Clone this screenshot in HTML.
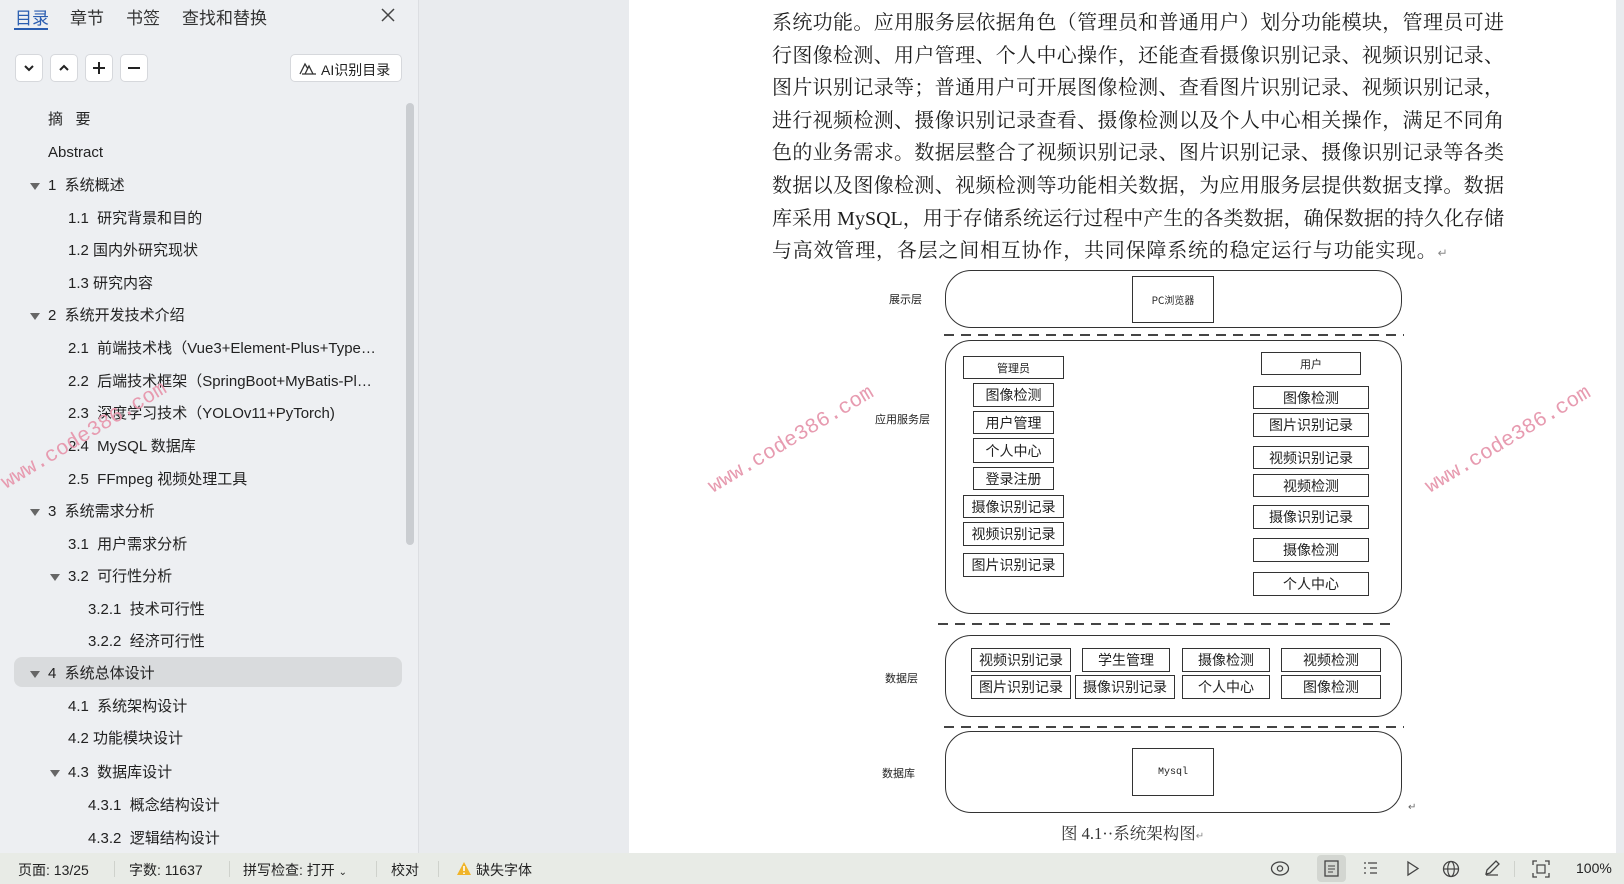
<!DOCTYPE html>
<html><head><meta charset="utf-8"><style>
*{margin:0;padding:0;box-sizing:border-box}
body{width:1624px;height:884px;overflow:hidden;position:relative;background:#e9ebee;font-family:"Liberation Sans","Noto Sans CJK SC",sans-serif;color:#222}
.a{position:absolute;white-space:nowrap}
#side{position:absolute;left:0;top:0;width:419px;height:853px;background:#edeff2;border-right:1px solid #dcdee2}
.tab{position:absolute;top:4px;font-size:17px;color:#333}
.btn{position:absolute;top:54px;width:28px;height:28px;background:#fff;border:1px solid #d6d8dc;border-radius:5px}
.it{position:absolute;font-size:15px;color:#222;line-height:20px}
.tri{position:absolute;width:0;height:0;border-left:5px solid transparent;border-right:5px solid transparent;border-top:7px solid #666}
#page{position:absolute;left:629px;top:0;width:987px;height:853px;background:#fff}
.ln{position:absolute;left:772px;width:732px;font-family:"Liberation Serif","Noto Serif CJK SC",serif;font-size:20px;line-height:32.6px;text-align:justify;text-align-last:justify;color:#1e1e1e;white-space:nowrap}
.rb{position:absolute;border:1.3px solid #333;border-radius:26px}
.bx{position:absolute;border:1.3px solid #333;display:flex;align-items:center;justify-content:center;font-family:"Noto Sans CJK SC",sans-serif;font-size:14px;color:#222;background:#fff}
.lb{position:absolute;font-family:"Noto Sans CJK SC",sans-serif;font-size:11px;color:#222;transform:translateY(-50%)}
.ds{position:absolute;height:1.5px;background:repeating-linear-gradient(90deg,#444 0 10px,transparent 10px 17px)}
.wm{position:absolute;font-family:"Liberation Mono",monospace;font-size:21px;color:#e79bb0;transform:rotate(-31deg);transform-origin:center;white-space:nowrap}
#status{position:absolute;left:0;top:853px;width:1624px;height:31px;background:#e8ebe6;font-size:14px;color:#222}
.st{position:absolute;top:7px}
.sep{position:absolute;top:8px;width:1px;height:16px;background:#cfd2cc}
</style></head><body>

<div id="side">
  <div class="tab" style="left:15px;color:#2a5db0">目录</div>
  <div class="a" style="left:14px;top:28px;width:34px;height:2px;background:#2a5db0"></div>
  <div class="tab" style="left:70px">章节</div>
  <div class="tab" style="left:126px">书签</div>
  <div class="tab" style="left:182px">查找和替换</div>
  <svg class="a" style="left:380px;top:7px" width="16" height="16"><path d="M2 2L14 14M14 2L2 14" stroke="#444" stroke-width="1.5"/></svg>

  <div class="btn" style="left:15px"><svg width="26" height="26"><path d="M9 11l4 4 4-4" fill="none" stroke="#222" stroke-width="2"/></svg></div>
  <div class="btn" style="left:50px"><svg width="26" height="26"><path d="M9 15l4-4 4 4" fill="none" stroke="#222" stroke-width="2"/></svg></div>
  <div class="btn" style="left:85px"><svg width="26" height="26"><path d="M13 7v12M7 13h12" stroke="#222" stroke-width="2"/></svg></div>
  <div class="btn" style="left:120px"><svg width="26" height="26"><path d="M7 13h12" stroke="#222" stroke-width="2"/></svg></div>
  <div class="btn" style="left:290px;width:112px;font-size:14px;padding:5px 0 0 30px">AI识别目录
    <svg class="a" style="left:8px;top:6px" width="18" height="14"><path d="M1 13L6 3 9 8M6 13L10 5 14 13M3 13h14" fill="none" stroke="#333" stroke-width="1.3"/></svg></div>

  <div class="a" style="left:406px;top:103px;width:8px;height:442px;background:#cacdd1;border-radius:4px"></div>
  <div class="a" style="left:14px;top:657px;width:388px;height:30px;background:#d9dbdd;border-radius:8px"></div>

  <div class="it" style="left:48px;top:110px">摘&nbsp;&nbsp;&nbsp;要</div>
  <div class="it" style="left:48px;top:143px">Abstract</div>
  <div class="tri" style="left:30px;top:183px"></div><div class="it" style="left:48px;top:176px">1&nbsp;&nbsp;系统概述</div>
  <div class="it" style="left:68px;top:209px">1.1&nbsp;&nbsp;研究背景和目的</div>
  <div class="it" style="left:68px;top:241px">1.2 国内外研究现状</div>
  <div class="it" style="left:68px;top:274px">1.3 研究内容</div>
  <div class="tri" style="left:30px;top:313px"></div><div class="it" style="left:48px;top:306px">2&nbsp;&nbsp;系统开发技术介绍</div>
  <div class="it" style="left:68px;top:339px">2.1&nbsp;&nbsp;前端技术栈（Vue3+Element-Plus+Type…</div>
  <div class="it" style="left:68px;top:372px">2.2&nbsp;&nbsp;后端技术框架（SpringBoot+MyBatis-Pl…</div>
  <div class="it" style="left:68px;top:404px">2.3&nbsp;&nbsp;深度学习技术（YOLOv11+PyTorch)</div>
  <div class="it" style="left:68px;top:437px">2.4&nbsp;&nbsp;MySQL 数据库</div>
  <div class="it" style="left:68px;top:470px">2.5&nbsp;&nbsp;FFmpeg 视频处理工具</div>
  <div class="tri" style="left:30px;top:509px"></div><div class="it" style="left:48px;top:502px">3&nbsp;&nbsp;系统需求分析</div>
  <div class="it" style="left:68px;top:535px">3.1&nbsp;&nbsp;用户需求分析</div>
  <div class="tri" style="left:50px;top:574px"></div><div class="it" style="left:68px;top:567px">3.2&nbsp;&nbsp;可行性分析</div>
  <div class="it" style="left:88px;top:600px">3.2.1&nbsp;&nbsp;技术可行性</div>
  <div class="it" style="left:88px;top:632px">3.2.2&nbsp;&nbsp;经济可行性</div>
  <div class="tri" style="left:30px;top:671px"></div><div class="it" style="left:48px;top:664px">4&nbsp;&nbsp;系统总体设计</div>
  <div class="it" style="left:68px;top:697px">4.1&nbsp;&nbsp;系统架构设计</div>
  <div class="it" style="left:68px;top:729px">4.2 功能模块设计</div>
  <div class="tri" style="left:50px;top:770px"></div><div class="it" style="left:68px;top:763px">4.3&nbsp;&nbsp;数据库设计</div>
  <div class="it" style="left:88px;top:796px">4.3.1&nbsp;&nbsp;概念结构设计</div>
  <div class="it" style="left:88px;top:829px">4.3.2&nbsp;&nbsp;逻辑结构设计</div>
</div>

<div id="page"></div>

<div class="ln" style="top:7px">系统功能。应用服务层依据角色（管理员和普通用户）划分功能模块，管理员可进</div>
<div class="ln" style="top:39.6px">行图像检测、用户管理、个人中心操作，还能查看摄像识别记录、视频识别记录、</div>
<div class="ln" style="top:72.2px">图片识别记录等；普通用户可开展图像检测、查看图片识别记录、视频识别记录，</div>
<div class="ln" style="top:104.8px">进行视频检测、摄像识别记录查看、摄像检测以及个人中心相关操作，满足不同角</div>
<div class="ln" style="top:137.4px">色的业务需求。数据层整合了视频识别记录、图片识别记录、摄像识别记录等各类</div>
<div class="ln" style="top:170px">数据以及图像检测、视频检测等功能相关数据，为应用服务层提供数据支撑。数据</div>
<div class="ln" style="top:202.6px">库采用 MySQL，用于存储系统运行过程中产生的各类数据，确保数据的持久化存储</div>
<div class="ln" style="top:235.2px;text-align-last:left;letter-spacing:0.8px">与高效管理，各层之间相互协作，共同保障系统的稳定运行与功能实现。<span style="font-size:12px;color:#888">↵</span></div>

<!-- diagram -->
<div class="lb" style="left:889px;top:299px">展示层</div>
<div class="rb" style="left:945px;top:270px;width:457px;height:58px"></div>
<div class="bx" style="left:1132px;top:276px;width:82px;height:47px;font-size:10px">PC浏览器</div>
<div class="ds" style="left:944px;top:334px;width:460px"></div>

<div class="lb" style="left:875px;top:419px">应用服务层</div>
<div class="rb" style="left:945px;top:340px;width:457px;height:274px"></div>
<div class="bx" style="left:963px;top:356px;width:101px;height:23px;font-size:11px">管理员</div>
<div class="bx" style="left:973px;top:383px;width:81px;height:24px">图像检测</div>
<div class="bx" style="left:973px;top:411px;width:81px;height:23px">用户管理</div>
<div class="bx" style="left:973px;top:438px;width:81px;height:25px">个人中心</div>
<div class="bx" style="left:973px;top:467px;width:81px;height:23px">登录注册</div>
<div class="bx" style="left:963px;top:495px;width:101px;height:23px">摄像识别记录</div>
<div class="bx" style="left:963px;top:522px;width:101px;height:24px">视频识别记录</div>
<div class="bx" style="left:963px;top:553px;width:101px;height:24px">图片识别记录</div>
<div class="bx" style="left:1261px;top:352px;width:100px;height:23px;font-size:11px">用户</div>
<div class="bx" style="left:1253px;top:386px;width:116px;height:23px">图像检测</div>
<div class="bx" style="left:1253px;top:413px;width:116px;height:24px">图片识别记录</div>
<div class="bx" style="left:1253px;top:446px;width:116px;height:23px">视频识别记录</div>
<div class="bx" style="left:1253px;top:474px;width:116px;height:23px">视频检测</div>
<div class="bx" style="left:1253px;top:505px;width:116px;height:24px">摄像识别记录</div>
<div class="bx" style="left:1253px;top:538px;width:116px;height:24px">摄像检测</div>
<div class="bx" style="left:1253px;top:572px;width:116px;height:24px">个人中心</div>
<div class="ds" style="left:938px;top:623px;width:459px"></div>

<div class="lb" style="left:885px;top:678px">数据层</div>
<div class="rb" style="left:945px;top:635px;width:457px;height:82px"></div>
<div class="bx" style="left:971px;top:648px;width:100px;height:24px">视频识别记录</div>
<div class="bx" style="left:1082px;top:648px;width:88px;height:24px">学生管理</div>
<div class="bx" style="left:1182px;top:648px;width:88px;height:24px">摄像检测</div>
<div class="bx" style="left:1281px;top:648px;width:100px;height:24px">视频检测</div>
<div class="bx" style="left:971px;top:675px;width:100px;height:24px">图片识别记录</div>
<div class="bx" style="left:1075px;top:675px;width:100px;height:24px">摄像识别记录</div>
<div class="bx" style="left:1182px;top:675px;width:88px;height:24px">个人中心</div>
<div class="bx" style="left:1281px;top:675px;width:100px;height:24px">图像检测</div>
<div class="ds" style="left:944px;top:726px;width:460px"></div>

<div class="lb" style="left:882px;top:773px">数据库</div>
<div class="rb" style="left:945px;top:731px;width:457px;height:82px"></div>
<div class="bx" style="left:1132px;top:748px;width:82px;height:48px;font-size:10px;font-family:'Liberation Mono',monospace">Mysql</div>
<div class="a" style="left:1408px;top:802px;font-size:10px;color:#666">↵</div>
<div class="a" style="left:1061px;top:820px;font-family:'Liberation Serif','Noto Serif CJK SC',serif;font-size:16.5px;color:#333">图 4.1··系统架构图<span style="font-size:10px;color:#888">↵</span></div>

<div class="wm" style="left:-10px;top:425px">www.code386.com</div>
<div class="wm" style="left:697px;top:429px">www.code386.com</div>
<div class="wm" style="left:1414px;top:429px">www.code386.com</div>

<div id="status">
  <div class="st" style="left:18px">页面: 13/25</div>
  <div class="sep" style="left:114px"></div>
  <div class="st" style="left:129px">字数: 11637</div>
  <div class="sep" style="left:229px"></div>
  <div class="st" style="left:243px">拼写检查: 打开 <span style="font-size:10px">⌄</span></div>
  <div class="sep" style="left:376px"></div>
  <div class="st" style="left:391px">校对</div>
  <div class="sep" style="left:438px"></div>
  <svg class="a" style="left:456px;top:8px" width="16" height="15"><path d="M8 1L15 14H1Z" fill="#f0b429"/><path d="M8 5v5M8 11.5v1.5" stroke="#fff" stroke-width="1.6"/></svg>
  <div class="st" style="left:476px">缺失字体</div>
  <svg class="a" style="left:1270px;top:7px" width="20" height="17"><ellipse cx="10" cy="8.5" rx="8.5" ry="6.5" fill="none" stroke="#444" stroke-width="1.3"/><circle cx="10" cy="8.5" r="2.6" fill="none" stroke="#444" stroke-width="1.3"/></svg>
  <div class="a" style="left:1317px;top:2px;width:29px;height:27px;background:#d3d6d1;border-radius:4px"></div>
  <svg class="a" style="left:1323px;top:7px" width="17" height="17"><rect x="2" y="1" width="13" height="15" fill="none" stroke="#444" stroke-width="1.3"/><path d="M5 6h7M5 9h7M5 12h5" stroke="#444"/></svg>
  <svg class="a" style="left:1362px;top:7px" width="17" height="17"><path d="M2 3h2M2 8h2M2 13h2M6 3h9M8 8h7M8 13h7" stroke="#444" stroke-width="1.3"/></svg>
  <svg class="a" style="left:1404px;top:7px" width="17" height="17"><path d="M4 2L14 8.5 4 15Z" fill="none" stroke="#444" stroke-width="1.3"/></svg>
  <svg class="a" style="left:1442px;top:7px" width="18" height="18"><circle cx="9" cy="9" r="7.5" fill="none" stroke="#444" stroke-width="1.3"/><ellipse cx="9" cy="9" rx="3.3" ry="7.5" fill="none" stroke="#444" stroke-width="1.2"/><path d="M1.5 9h15" stroke="#444" stroke-width="1.2"/></svg>
  <svg class="a" style="left:1483px;top:6px" width="18" height="18"><path d="M3 15l1-4L13 2l3 3-9 9Z M3 16h12" fill="none" stroke="#444" stroke-width="1.3"/></svg>
  <div class="sep" style="left:1514px"></div>
  <svg class="a" style="left:1532px;top:7px" width="18" height="18"><path d="M1 5V1h4M13 1h4v4M17 13v4h-4M5 17H1v-4" fill="none" stroke="#444" stroke-width="1.3"/><rect x="5" y="5" width="8" height="8" fill="none" stroke="#444" stroke-width="1.2"/></svg>
  <div class="st" style="left:1576px">100%</div>
</div>
</body></html>
